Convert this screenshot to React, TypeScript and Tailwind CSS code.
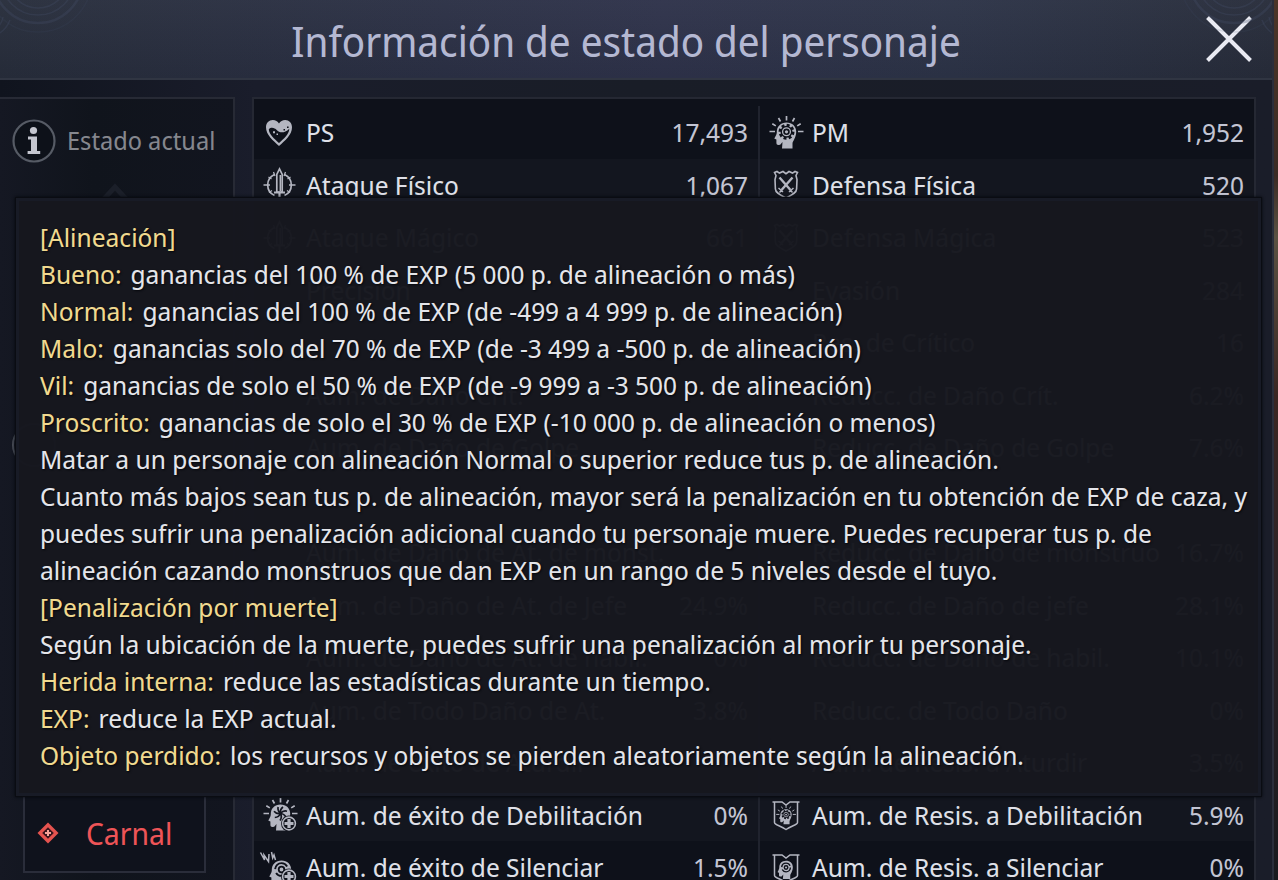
import type { ReactNode } from 'react';

type IconName = 'heart' | 'mind' | 'sword' | 'shield' | 'weaken' | 'weakenShield' | 'silence' | 'silenceShield' | 'none';

type Stat = { icon: IconName; label: string; value: string };

const rows: [Stat, Stat][] = [
  [{ icon: 'heart', label: 'PS', value: '17,493' }, { icon: 'mind', label: 'PM', value: '1,952' }],
  [{ icon: 'sword', label: 'Ataque Físico', value: '1,067' }, { icon: 'shield', label: 'Defensa Física', value: '520' }],
  [{ icon: 'sword', label: 'Ataque Mágico', value: '661' }, { icon: 'shield', label: 'Defensa Mágica', value: '523' }],
  [{ icon: 'none', label: 'Precisión', value: '' }, { icon: 'none', label: 'Evasión', value: '284' }],
  [{ icon: 'none', label: '', value: '' }, { icon: 'none', label: 'Res. de Crítico', value: '16' }],
  [{ icon: 'none', label: 'Aum. de Daño Crít.', value: '' }, { icon: 'none', label: 'Reducc. de Daño Crít.', value: '6.2%' }],
  [{ icon: 'none', label: 'Aum. de Daño de Golpe', value: '' }, { icon: 'none', label: 'Reducc. de Daño de Golpe', value: '7.6%' }],
  [{ icon: 'none', label: '', value: '' }, { icon: 'none', label: '', value: '' }],
  [{ icon: 'none', label: 'Aum. de Daño de At. de monst.', value: '' }, { icon: 'none', label: 'Reducc. de Daño de monstruo', value: '16.7%' }],
  [{ icon: 'none', label: 'Aum. de Daño de At. de Jefe', value: '24.9%' }, { icon: 'none', label: 'Reducc. de Daño de jefe', value: '28.1%' }],
  [{ icon: 'none', label: 'Aum. de Daño de At. de habil.', value: '0%' }, { icon: 'none', label: 'Reducc. de Daño de habil.', value: '10.1%' }],
  [{ icon: 'none', label: 'Aum. de Todo Daño de At.', value: '3.8%' }, { icon: 'none', label: 'Reducc. de Todo Daño', value: '0%' }],
  [{ icon: 'none', label: 'Aum. de éxito de Aturdir', value: '' }, { icon: 'none', label: 'Aum. de Resis. a Aturdir', value: '3.5%' }],
  [{ icon: 'weaken', label: 'Aum. de éxito de Debilitación', value: '0%' }, { icon: 'weakenShield', label: 'Aum. de Resis. a Debilitación', value: '5.9%' }],
  [{ icon: 'silence', label: 'Aum. de éxito de Silenciar', value: '1.5%' }, { icon: 'silenceShield', label: 'Aum. de Resis. a Silenciar', value: '0%' }],
];

const notes: { term?: string; text?: string }[] = [
  { term: '[Alineación]' },
  { term: 'Bueno:', text: 'ganancias del 100 % de EXP (5 000 p. de alineación o más)' },
  { term: 'Normal:', text: 'ganancias del 100 % de EXP (de -499 a 4 999 p. de alineación)' },
  { term: 'Malo:', text: 'ganancias solo del 70 % de EXP (de -3 499 a -500 p. de alineación)' },
  { term: 'Vil:', text: 'ganancias de solo el 50 % de EXP (de -9 999 a -3 500 p. de alineación)' },
  { term: 'Proscrito:', text: 'ganancias de solo el 30 % de EXP (-10 000 p. de alineación o menos)' },
  { text: 'Matar a un personaje con alineación Normal o superior reduce tus p. de alineación.' },
  {
    text: 'Cuanto más bajos sean tus p. de alineación, mayor será la penalización en tu obtención de EXP de caza, y puedes sufrir una penalización adicional cuando tu personaje muere. Puedes recuperar tus p. de alineación cazando monstruos que dan EXP en un rango de 5 niveles desde el tuyo.',
  },
  { term: '[Penalización por muerte]' },
  { text: 'Según la ubicación de la muerte, puedes sufrir una penalización al morir tu personaje.' },
  { term: 'Herida interna:', text: 'reduce las estadísticas durante un tiempo.' },
  { term: 'EXP:', text: 'reduce la EXP actual.' },
  { term: 'Objeto perdido:', text: 'los recursos y objetos se pierden aleatoriamente según la alineación.' },
];

const HEAD =
  'M16.500 5.500c-5.700 0-9.700 4-9.700 9.300 0 1.400-.1 2.200-.9 3.600L4.600 21c-.3.600 0 1 .6 1.100l1.200.3v3.300c0 1.600.8 2.300 2.300 2.200l1.500-.1 2.300-2.800-.5 6.500h10.500v-5c0-2 3.700-5.700 3.700-11.700 0-5.500-4-9.300-9.700-9.300z';

function Rays() {
  return (
    <path
      d="M16.500-1v4.500M8.500 1l2 3.500M2.300 6.700l3.500 2.200M-.5 14.500H5M24.500 1l-2 3.500M30.700 6.700l-3.500 2.200M33.500 14.500H28"
      stroke="currentColor"
      strokeWidth="1.700"
      fill="none"
    />
  );
}

function Gear() {
  return (
    <>
      <circle cx="16.500" cy="14.800" r="6" fill="#0e111a" />
      <circle cx="16.500" cy="14.800" r="6.600" fill="none" stroke="#0e111a" strokeWidth="2.800" strokeDasharray="2.900 2.280" />
      <circle cx="16.500" cy="14.800" r="3.900" fill="none" stroke="currentColor" strokeWidth="1.300" />
      <circle cx="16.500" cy="14.800" r="1.600" fill="currentColor" />
    </>
  );
}

function Pinwheel() {
  return (
    <g fill="none" stroke="#12151f" strokeWidth="1.700">
      <path d="M16.500 14.500c-.5-2.500.2-4.800 2.500-6.500M16.500 14.500c1.600-2 3.800-3 6.500-2.300M16.500 14.500c2.600.2 4.600 1.500 5.500 4.200M16.500 14.500c1.200 2.300 1.200 4.600-.5 7M16.500 14.500c-1 2.400-2.900 3.800-5.700 4M16.500 14.500c-2.500.6-4.700 0-6.500-2.200M16.500 14.500c-2-1.700-2.900-3.800-2.400-6.500" />
    </g>
  );
}

function PlusBadge() {
  return (
    <>
      <circle cx="25" cy="24.500" r="8" fill="#11141d" />
      <circle cx="25" cy="24.500" r="6.400" fill="none" stroke="currentColor" strokeWidth="1.600" />
      <path d="M25 20v9M20.500 24.500h9" stroke="currentColor" strokeWidth="3.200" />
    </>
  );
}

function CrestShield({ children }: { children: ReactNode }) {
  return (
    <>
      <path
        d="M2.500 3H12l4 3 4-3h9.500M4.500 3.500v20c0 2.500 6 3 11.500 7 5.500-4 11.500-4.500 11.500-7v-20"
        fill="none"
        stroke="currentColor"
        strokeWidth="1.500"
      />
      {children}
    </>
  );
}

function drawing(name: IconName) {
  switch (name) {
    case 'heart':
      return (
        <>
          <path d="M15 29C9 23.500 2 18 2 10.300 2 6 5 3 8.800 3c2.700 0 4.900 1.300 6.200 3.600C16.300 4.300 18.500 3 21.200 3 25 3 28 6 28 10.300 28 18 21 23.500 15 29z" fill="currentColor" />
          <path d="M4.800 12.200c2.600-2.600 6-1.200 7.900.8 2.900 3 7.600 3.600 12.600-1.300C25 17.600 19.600 21.700 15 26 10.400 21.700 5 17.600 4.800 12.200z" fill="#0e111a" />
          <path d="M9 14.300h2v2H9zM12.500 16.500H14V18h-1.500z" fill="currentColor" />
          <path d="M19.500 12H21v1.500h-1.500zM23 9.500h1.600v1.600H23z" fill="#0e111a" />
        </>
      );
    case 'mind':
      return (
        <>
          <Rays />
          <path d={HEAD} fill="currentColor" />
          <Gear />
        </>
      );
    case 'sword':
      return (
        <g fill="none" stroke="currentColor">
          <path d="M10.500 5.500A11.500 11.500 0 0 0 10.500 26.500M20.500 5.500A11.500 11.500 0 0 1 20.500 26.500" strokeWidth="1.700" />
          <path d="M-.5 16H6M31.500 16H25M4.500 8l3 2M26.500 8l-3 2M5 23.500l3-2M26 23.500l-3-2M9.500 3 11 7M21.500 3 20 7" strokeWidth="1.300" />
          <path d="M12.800 23V5.500L15.500 0l2.700 5.500V23z" strokeWidth="1.700" />
          <path d="M16.300 6v16" strokeWidth="1.500" />
          <path d="M10 23.500h11M15.500 24v7" strokeWidth="2.200" />
        </g>
      );
    case 'shield':
      return (
        <g fill="none" stroke="currentColor">
          <path d="M4.500 3.500 7 2.500l2.500 1.600L13 2.500l3 2.200 3-2.200 3.500 1.600L25 2.500l2.500 1-1.500 3 1 4-.4 9.500c0 4-5.600 6.300-10.600 9-5-2.700-10.600-5-10.600-9L5 10.500l1-4z" strokeWidth="1.600" />
          <path d="m9.500 8.500 11 12.500M22.500 8.500 11.500 21" strokeWidth="2.400" />
          <path d="m8.500 19 4.500 4M23.500 19 19 23M9.500 23.500l2-2.300M22.500 23.500l-2-2.300" strokeWidth="1.500" />
        </g>
      );
    case 'weaken':
      return (
        <>
          <Rays />
          <path d={HEAD} fill="currentColor" />
          <Pinwheel />
          <PlusBadge />
        </>
      );
    case 'weakenShield':
      return (
        <CrestShield>
          <g transform="translate(6.500 7) scale(.58)">
            <Rays />
            <path d={HEAD} fill="currentColor" />
            <Gear />
          </g>
        </CrestShield>
      );
    case 'silence':
      return (
        <>
          <path d="M-3.500.5l4 7.500-.5-5 4.500 6.500.5-7.500M7.500 0l1.200 6 1.300-3L11.500 8" fill="none" stroke="currentColor" strokeWidth="1.500" />
          <path d={HEAD} fill="currentColor" transform="translate(1 3)" />
          <circle cx="17.500" cy="17.500" r="6.400" fill="none" stroke="#0e111a" strokeWidth="1.900" strokeDasharray="16 4" />
          <circle cx="17.500" cy="17.500" r="2.800" fill="none" stroke="#0e111a" strokeWidth="1.800" />
          <PlusBadge />
        </>
      );
    case 'silenceShield':
      return (
        <CrestShield>
          <g transform="translate(4.500 5) scale(.7)">
            <path d={HEAD} fill="currentColor" />
            <circle cx="16.500" cy="15" r="6.200" fill="none" stroke="#0e111a" strokeWidth="2" strokeDasharray="16 3.500" />
            <circle cx="16.500" cy="15" r="2.500" fill="none" stroke="#0e111a" strokeWidth="2" />
          </g>
        </CrestShield>
      );
    default:
      return null;
  }
}

function StatIcon({ name }: { name: IconName }) {
  return (
    <svg viewBox="0 0 32 32" className="size-8 shrink-0 overflow-visible text-[#b4b6c1]" aria-hidden="true">
      {drawing(name)}
    </svg>
  );
}

function StatCells({ stat, divided }: { stat: Stat; divided?: boolean }) {
  return (
    <>
      <th scope="row" className={divided ? 'border-l-2 border-[#20232e] p-0 pl-[10px] text-left font-normal' : 'p-0 pl-[10px] text-left font-normal'}>
        <span className="flex items-center gap-[10px] whitespace-nowrap">
          <StatIcon name={stat.icon} />
          {stat.label}
        </span>
      </th>
      <td className="p-0 pr-[10px] text-right text-[#c3c5d3]">{stat.value}</td>
    </>
  );
}

function CornerRings({ className }: { className: string }) {
  return (
    <svg viewBox="0 0 110 50" className={className} fill="none" stroke="#46506a" strokeOpacity=".3" strokeWidth="1.500" aria-hidden="true">
      <circle cx="38" cy="-22" r="30" />
      <circle cx="38" cy="-22" r="37" />
      <circle cx="38" cy="-22" r="45" strokeWidth="2.500" />
      <circle cx="38" cy="-22" r="54" strokeOpacity=".15" />
      <path d="M-2 34q8-4 12-14M-2 27q4-4 5-10" />
    </svg>
  );
}

export default function App() {
  return (
    <div className="flex h-screen overflow-hidden bg-[#2b2422] font-['Noto_Sans_Display','Noto_Sans',sans-serif]">
      <main className="relative flex min-w-0 flex-1 flex-col border-r-2 border-[#2a2e3b] bg-[linear-gradient(90deg,#10141e,#1a1d2b_20%,#191d27_50%,#1a1d29)]">
        <header className="relative grid h-20 shrink-0 grid-cols-[1fr_auto_1fr] items-center border-b-2 border-[#303542] bg-[linear-gradient(180deg,#ffffff08,#0000000c),linear-gradient(90deg,#272d3b,#2b3045_35%,#2e324a_52%,#2c3347_75%,#272c3a)] pr-[20px]">
          <CornerRings className="absolute top-0 left-0 h-[50px] w-[110px]" />
          <CornerRings className="absolute top-0 right-0 h-[50px] w-[110px] -scale-x-100" />
          <h1 className="col-start-2 pt-1 text-[41px] leading-[60px] whitespace-nowrap text-[#b4b8d2]">Información de estado del personaje</h1>
          <button type="button" aria-label="Cerrar" className="justify-self-end">
            <svg viewBox="0 0 46 46" className="size-[46px]" stroke="#e9eaf2" strokeWidth="4" aria-hidden="true">
              <path d="M1.500 1.500l43 43M44.500 1.500l-43 43" />
            </svg>
          </button>
        </header>

        <div className="flex min-h-0 flex-1 gap-[17px] pt-[17px] pr-4">
          <nav className="flex w-[235px] shrink-0 flex-col overflow-hidden border-t-2 border-r-2 border-[#272a35] bg-[linear-gradient(90deg,#151823,#10141c_40%,#12151f)] px-3">
            <button type="button" className="mt-[20px] flex h-[44px] items-center gap-[11px] text-[25px] whitespace-nowrap text-[#85878e]">
              <svg viewBox="0 0 44 44" className="size-11 shrink-0" aria-hidden="true">
                <circle cx="22" cy="22" r="20.500" fill="#0d1119" stroke="#565b65" strokeWidth="2.200" />
                <circle cx="21.500" cy="11.500" r="3.600" fill="#c4c6cf" />
                <path d="M16 17.500h9V32h3.200v3H15.600v-3H19V20.500h-3z" fill="#c4c6cf" />
              </svg>
              Estado actual
            </button>
            <svg viewBox="0 0 30 20" className="mt-[20px] ml-[88px] h-5 w-[30px] shrink-0" fill="none" stroke="#1b1f29" strokeWidth="5" aria-hidden="true">
              <path d="M3 17 15 4l12 13" />
            </svg>
            <button type="button" aria-label="Alineación" className="mt-[220px] size-11 shrink-0 rounded-full border-2 border-[#4a4e58]" />
            <button type="button" className="mt-[326px] ml-[11px] flex h-[80px] w-[183px] shrink-0 items-center gap-[26px] border-2 border-[#2a2d3a] bg-[#0f121c] pl-[11px] text-[30px] text-[#ee5457]">
              <svg viewBox="0 0 24 24" className="size-6" aria-hidden="true">
                <path d="M12 1.500 22.500 12 12 22.500 1.500 12z" fill="#e5534f" />
                <path d="M12 6.200 17.800 12 12 17.800 6.200 12z" fill="#38151c" />
                <path d="M12 9v6M9 12h6" stroke="#f5a49a" strokeWidth="2" />
              </svg>
              Carnal
            </button>
          </nav>

          <section className="min-w-0 flex-1 self-start border-2 border-[#252833] bg-[#0e111a] pt-[7px]">
            <table className="w-full table-fixed border-collapse text-[26px] text-[#dfe0e8]">
              <colgroup>
                <col className="w-[39%]" />
                <col className="w-[11.5%]" />
                <col className="w-[39%]" />
                <col className="w-[10.5%]" />
              </colgroup>
              <tbody>
                {rows.map(([left, right], i) => (
                  <tr key={i} className={i % 2 ? 'h-[52px] bg-[#13161f]' : 'h-[53px]'}>
                    <StatCells stat={left} />
                    <StatCells stat={right} divided />
                  </tr>
                ))}
              </tbody>
            </table>
          </section>
        </div>

        <div role="tooltip" className="absolute top-[197px] right-[10px] left-[15px] border border-[#0a0c12] bg-[#16171f]/98 pt-[21px] pr-[8px] pb-[22px] pl-[24px] text-[26px] leading-[37px] text-[#e4e5ea] shadow-[inset_0_0_0_3px_#181b26,0_0_3px_#05070c] text-shadow-[1px_1px_2px_#05070c]">
          {notes.map((note, i) => (
            <p key={i}>
              {note.term && <span className={note.text ? 'mr-[9px] text-[#f0d98f]' : 'text-[#f0d98f]'}>{note.term}</span>}
              {note.text}
            </p>
          ))}
        </div>
      </main>
      <div className="w-1 shrink-0 bg-[linear-gradient(180deg,#4b3528,#3b2b24_20%,#5a5142_27%,#3a2622_45%,#2a2226_70%,#191a1e)]" />
    </div>
  );
}
